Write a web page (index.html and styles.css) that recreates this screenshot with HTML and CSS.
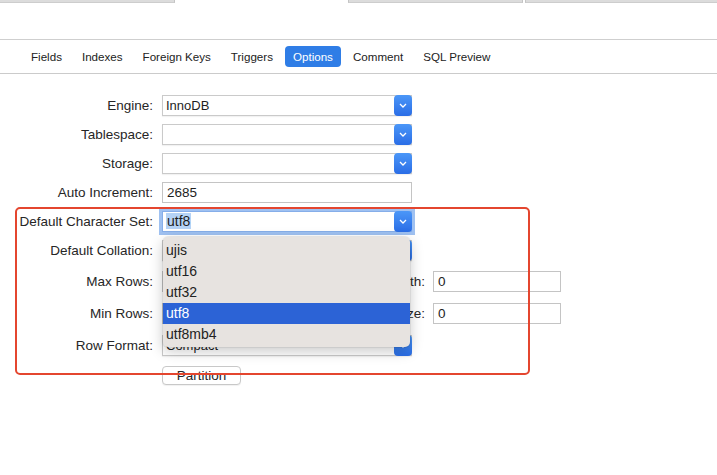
FILE: index.html
```html
<!DOCTYPE html>
<html lang="en">
<head>
  <meta charset="UTF-8" />
  <title>Table Options</title>
  <link rel="stylesheet" href="styles.css">
</head>
<body>
  <div class="page">
    <div class="tabstrip">
      <span class="seg seg-a"></span>
      <span class="seg seg-open"></span>
      <span class="seg seg-b"></span>
      <span class="seg seg-c"></span>
    </div>

    <nav class="tabs">
      <span class="tab">Fields</span>
      <span class="tab">Indexes</span>
      <span class="tab">Foreign Keys</span>
      <span class="tab">Triggers</span>
      <span class="tab active">Options</span>
      <span class="tab">Comment</span>
      <span class="tab">SQL Preview</span>
    </nav>

    <div class="form">
      <div class="row">
        <span class="label">Engine:</span>
        <div class="select"><span class="value">InnoDB</span><span class="arrow"><svg width="8" height="5" viewBox="0 0 8 5"><polyline points="1,1 4,4 7,1" fill="none" stroke="#fff" stroke-width="1.3"/></svg></span></div>
      </div>
      <div class="row">
        <span class="label">Tablespace:</span>
        <div class="select"><span class="value"></span><span class="arrow"><svg width="8" height="5" viewBox="0 0 8 5"><polyline points="1,1 4,4 7,1" fill="none" stroke="#fff" stroke-width="1.3"/></svg></span></div>
      </div>
      <div class="row">
        <span class="label">Storage:</span>
        <div class="select"><span class="value"></span><span class="arrow"><svg width="8" height="5" viewBox="0 0 8 5"><polyline points="1,1 4,4 7,1" fill="none" stroke="#fff" stroke-width="1.3"/></svg></span></div>
      </div>
      <div class="row">
        <span class="label">Auto Increment:</span>
        <div class="input">2685</div>
      </div>
      <div class="row">
        <span class="label">Default Character Set:</span>
        <div class="select focused"><span class="value"><span class="sel-text">utf8</span></span><span class="arrow"><svg width="8" height="5" viewBox="0 0 8 5"><polyline points="1,1 4,4 7,1" fill="none" stroke="#fff" stroke-width="1.3"/></svg></span></div>
      </div>
      <div class="row">
        <span class="label">Default Collation:</span>
        <div class="select"><span class="value"></span><span class="arrow"><svg width="8" height="5" viewBox="0 0 8 5"><polyline points="1,1 4,4 7,1" fill="none" stroke="#fff" stroke-width="1.3"/></svg></span></div>
      </div>
      <div class="row row-wide">
        <span class="label">Max Rows:</span>
        <div class="input short"></div>
        <span class="sub-label">Avg Row Length:</span>
        <div class="input side">0</div>
      </div>
      <div class="row row-mid">
        <span class="label">Min Rows:</span>
        <div class="input short"></div>
        <span class="sub-label">Key Block Size:</span>
        <div class="input side">0</div>
      </div>
      <div class="row row-wide">
        <span class="label">Row Format:</span>
        <div class="select"><span class="value">Compact</span><span class="arrow"><svg width="8" height="5" viewBox="0 0 8 5"><polyline points="1,1 4,4 7,1" fill="none" stroke="#fff" stroke-width="1.3"/></svg></span></div>
      </div>
      <div class="row row-last">
        <span class="label"></span>
        <button class="btn">Partition</button>
      </div>
    </div>

    <!-- open dropdown of Default Character Set -->
    <ul class="popup">
      <li>ujis</li>
      <li>utf16</li>
      <li>utf32</li>
      <li class="current">utf8</li>
      <li>utf8mb4</li>
    </ul>

    <div class="mark"></div>
  </div>
</body>
</html>
```

FILE: styles.css
```css
* { box-sizing: border-box; margin: 0; padding: 0; }
body { font-family: "Liberation Sans", Arial, sans-serif; background: #fff; color: #262626; }
.page { position: relative; width: 717px; height: 475px; overflow: hidden; background: #fff; }

/* top strip */
.tabstrip { display: flex; height: 3px; }
.seg { display: block; height: 3px; background: #dcdcdc; border-bottom: 1px solid #cdcdcd; }
.seg-a { width: 175px; border-right: 1px solid #c4c4c4; }
.seg-open { width: 173px; background: #fff; border-bottom: none; }
.seg-b { width: 175px; border-left: 1px solid #c4c4c4; border-right: 1px solid #c4c4c4; }
.seg-c { flex: 1; margin-left: 2px; border-left: 1px solid #c4c4c4; }

/* tabs */
.tabs { margin-top: 36px; height: 35px; display: flex; align-items: center; gap: 4px; padding-left: 23px; border-top: 1px solid #cfcfcf; border-bottom: 1px solid #cbcbcb; }
.tab { height: 21px; padding: 0 8px; line-height: 21px; font-size: 11.6px; color: #222; border-radius: 4px; }
.tab.active { background: #2f7de6; color: #fff; }

/* form */
.form { padding-top: 16.5px; }
.row { display: flex; align-items: center; height: 29px; }
.row-wide { height: 33px; }
.row-mid { height: 31px; }
.row-last { height: 27px; }
.label { width: 153px; flex: none; text-align: right; margin-right: 9px; font-size: 13.5px; color: #262626; white-space: nowrap; }
.select { display: flex; width: 250px; height: 21px; border: 1px solid #cacaca; background: #fff; font-size: 13px; box-shadow: 0 1px 1px rgba(0,0,0,0.05); }
.select .value { flex: 1; padding-left: 3px; line-height: 19px; color: #1e1e1e; overflow: hidden; }
.select .arrow { width: 18px; height: 21px; margin: -1px -1px 0 0; border-radius: 4px; background: linear-gradient(#4b97f8, #2a6de6); display: flex; align-items: center; justify-content: center; }
.select.focused { box-shadow: 0 0 0 3px #9fc1f1; border-color: #86aee9; font-size: 14px; }
.sel-text { background: #b5d3f6; padding: 0 1px; }
.input { width: 250px; height: 21px; border: 1px solid #c4c4c4; background: #fff; font-size: 13.5px; line-height: 19px; padding-left: 4px; color: #1e1e1e; }
.input.short { width: 150px; }
.input.side { width: 128px; }
.sub-label { width: 113px; text-align: right; margin-right: 8px; font-size: 13.5px; color: #262626; white-space: nowrap; }
.btn { width: 79px; height: 19px; border: 1px solid #c8c8c8; border-radius: 4px; background: #fff; font-family: inherit; font-size: 13.5px; color: #262626; box-shadow: 0 1px 1px rgba(0,0,0,0.06); }

/* dropdown popup */
.popup { position: absolute; left: 163px; top: 237px; width: 247px; height: 110px; padding-top: 3px; list-style: none; background: #e7e3e0; border-radius: 5px; box-shadow: 0 4px 14px rgba(0,0,0,0.22), 0 0 0 1px rgba(0,0,0,0.06); }
.popup li { height: 21px; line-height: 21px; padding-left: 3px; font-size: 14px; color: #222; }
.popup li.current { background: #2c63d6; color: #fff; }

/* annotation box */
.mark { position: absolute; left: 15px; top: 207px; width: 515px; height: 168px; border: 2.5px solid #e4462f; border-radius: 5px; }
```
